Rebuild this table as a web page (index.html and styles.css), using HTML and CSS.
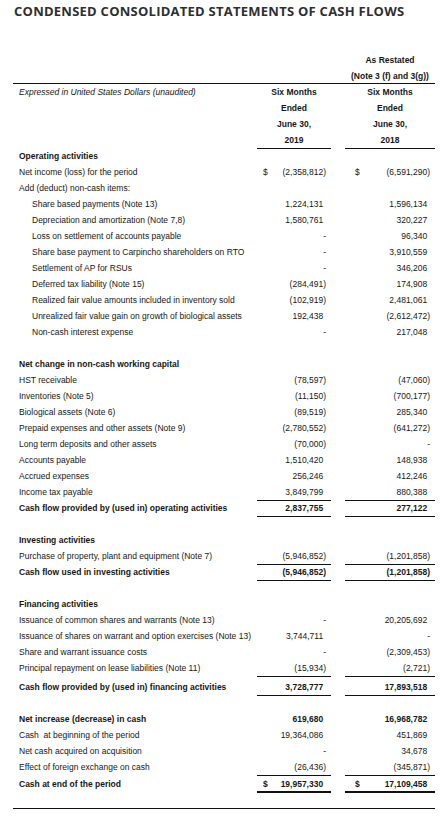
FILE: index.html
```html
<!DOCTYPE html>
<html lang="en">
<head>
<meta charset="utf-8">
<title>Condensed Consolidated Statements of Cash Flows</title>
<link rel="stylesheet" href="styles.css">
</head>
<body>
<h1 class="title">CONDENSED CONSOLIDATED STATEMENTS OF CASH FLOWS</h1>
<div class="statement">
  <div class="row"><div class="lbl"></div><div></div><div></div><div class="hd">As Restated</div></div>
  <div class="row rule-all"><div class="lbl"></div><div></div><div></div><div class="hd">(Note 3 (f) and 3(g))</div></div>
  <div class="row"><div class="lbl it">Expressed in United States Dollars (unaudited)</div><div class="hd">Six Months</div><div></div><div class="hd">Six Months</div></div>
  <div class="row"><div class="lbl"></div><div class="hd">Ended</div><div></div><div class="hd">Ended</div></div>
  <div class="row"><div class="lbl"></div><div class="hd">June 30,</div><div></div><div class="hd">June 30,</div></div>
  <div class="row"><div class="lbl"></div><div class="hd ul">2019</div><div></div><div class="hd ul">2018</div></div>

  <div class="row"><div class="lbl b">Operating activities</div><div></div><div></div><div></div></div>
  <div class="row"><div class="lbl">Net income (loss) for the period</div><div class="amt c1"><span class="cur">$</span><span>(2,358,812)</span></div><div></div><div class="amt c2"><span class="cur">$</span><span>(6,591,290)</span></div></div>
  <div class="row"><div class="lbl">Add (deduct) non-cash items:</div><div></div><div></div><div></div></div>
  <div class="row"><div class="lbl ind">Share based payments (Note 13)</div><div class="amt c1"><span class="p">1,224,131</span></div><div></div><div class="amt c2"><span class="p">1,596,134</span></div></div>
  <div class="row"><div class="lbl ind">Depreciation and amortization (Note 7,8)</div><div class="amt c1"><span class="p">1,580,761</span></div><div></div><div class="amt c2"><span class="p">320,227</span></div></div>
  <div class="row"><div class="lbl ind">Loss on settlement of accounts payable</div><div class="amt c1"><span>-</span></div><div></div><div class="amt c2"><span class="p">96,340</span></div></div>
  <div class="row"><div class="lbl ind">Share base payment to Carpincho shareholders on RTO</div><div class="amt c1"><span>-</span></div><div></div><div class="amt c2"><span class="p">3,910,559</span></div></div>
  <div class="row"><div class="lbl ind">Settlement of AP for RSUs</div><div class="amt c1"><span>-</span></div><div></div><div class="amt c2"><span class="p">346,206</span></div></div>
  <div class="row"><div class="lbl ind">Deferred tax liability (Note 15)</div><div class="amt c1"><span>(284,491)</span></div><div></div><div class="amt c2"><span class="p">174,908</span></div></div>
  <div class="row"><div class="lbl ind">Realized fair value amounts included in inventory sold</div><div class="amt c1"><span>(102,919)</span></div><div></div><div class="amt c2"><span class="p">2,481,061</span></div></div>
  <div class="row"><div class="lbl ind">Unrealized fair value gain on growth of biological assets</div><div class="amt c1"><span class="p">192,438</span></div><div></div><div class="amt c2"><span>(2,612,472)</span></div></div>
  <div class="row"><div class="lbl ind">Non-cash interest expense</div><div class="amt c1"><span>-</span></div><div></div><div class="amt c2"><span class="p">217,048</span></div></div>
  <div class="row"></div>

  <div class="row"><div class="lbl b">Net change in non-cash working capital</div><div></div><div></div><div></div></div>
  <div class="row"><div class="lbl">HST receivable</div><div class="amt c1"><span>(78,597)</span></div><div></div><div class="amt c2"><span>(47,060)</span></div></div>
  <div class="row"><div class="lbl">Inventories (Note 5)</div><div class="amt c1"><span>(11,150)</span></div><div></div><div class="amt c2"><span>(700,177)</span></div></div>
  <div class="row"><div class="lbl">Biological assets (Note 6)</div><div class="amt c1"><span>(89,519)</span></div><div></div><div class="amt c2"><span class="p">285,340</span></div></div>
  <div class="row"><div class="lbl">Prepaid expenses and other assets (Note 9)</div><div class="amt c1"><span>(2,780,552)</span></div><div></div><div class="amt c2"><span>(641,272)</span></div></div>
  <div class="row"><div class="lbl">Long term deposits and other assets</div><div class="amt c1"><span>(70,000)</span></div><div></div><div class="amt c2"><span>-</span></div></div>
  <div class="row"><div class="lbl">Accounts payable</div><div class="amt c1"><span class="p">1,510,420</span></div><div></div><div class="amt c2"><span class="p">148,938</span></div></div>
  <div class="row"><div class="lbl">Accrued expenses</div><div class="amt c1"><span class="p">256,246</span></div><div></div><div class="amt c2"><span class="p">412,246</span></div></div>
  <div class="row"><div class="lbl">Income tax payable</div><div class="amt c1 ul"><span class="p">3,849,799</span></div><div></div><div class="amt c2 ul"><span class="p">880,388</span></div></div>
  <div class="row b"><div class="lbl">Cash flow provided by (used in) operating activities</div><div class="amt c1 ul"><span class="p">2,837,755</span></div><div></div><div class="amt c2 ul"><span class="p">277,122</span></div></div>
  <div class="row"></div>

  <div class="row"><div class="lbl b">Investing activities</div><div></div><div></div><div></div></div>
  <div class="row"><div class="lbl">Purchase of property, plant and equipment (Note 7)</div><div class="amt c1 ul"><span>(5,946,852)</span></div><div></div><div class="amt c2 ul"><span>(1,201,858)</span></div></div>
  <div class="row b"><div class="lbl">Cash flow used in investing activities</div><div class="amt c1 ul"><span>(5,946,852)</span></div><div></div><div class="amt c2 ul"><span>(1,201,858)</span></div></div>
  <div class="row"></div>

  <div class="row"><div class="lbl b">Financing activities</div><div></div><div></div><div></div></div>
  <div class="row"><div class="lbl">Issuance of common shares and warrants (Note 13)</div><div class="amt c1"><span>-</span></div><div></div><div class="amt c2"><span class="p">20,205,692</span></div></div>
  <div class="row"><div class="lbl">Issuance of shares on warrant and option exercises (Note 13)</div><div class="amt c1"><span class="p">3,744,711</span></div><div></div><div class="amt c2"><span>-</span></div></div>
  <div class="row"><div class="lbl">Share and warrant issuance costs</div><div class="amt c1"><span>-</span></div><div></div><div class="amt c2"><span>(2,309,453)</span></div></div>
  <div class="row h17"><div class="lbl">Principal repayment on lease liabilities (Note 11)</div><div class="amt c1 ul"><span>(15,934)</span></div><div></div><div class="amt c2 ul"><span>(2,721)</span></div></div>
  <div class="row b h18"><div class="lbl">Cash flow provided by (used in) financing activities</div><div class="amt c1 ul"><span class="p">3,728,777</span></div><div></div><div class="amt c2 ul"><span class="p">17,893,518</span></div></div>
  <div class="row"></div>

  <div class="row b"><div class="lbl">Net increase (decrease) in cash</div><div class="amt c1"><span class="p">619,680</span></div><div></div><div class="amt c2"><span class="p">16,968,782</span></div></div>
  <div class="row"><div class="lbl">Cash &nbsp;at beginning of the period</div><div class="amt c1"><span class="p">19,364,086</span></div><div></div><div class="amt c2"><span class="p">451,869</span></div></div>
  <div class="row"><div class="lbl">Net cash acquired on acquisition</div><div class="amt c1"><span>-</span></div><div></div><div class="amt c2"><span class="p">34,678</span></div></div>
  <div class="row"><div class="lbl">Effect of foreign exchange on cash</div><div class="amt c1 ul"><span>(26,436)</span></div><div></div><div class="amt c2 ul"><span>(345,871)</span></div></div>
  <div class="row b end"><div class="lbl">Cash at end of the period</div><div class="amt c1 dul"><span class="cur">$</span><span class="p">19,957,330</span></div><div></div><div class="amt c2 dul"><span class="cur">$</span><span class="p">17,109,458</span></div></div>
  <div class="row rule-all"></div>
</div>
</body>
</html>
```
FILE: styles.css
```css
html, body {
  margin: 0;
  padding: 0;
  background: #ffffff;
}

.title {
  margin: 0;
  padding: 3px 0 0 14px;
  font-family: "Open Sans", "DejaVu Sans", sans-serif;
  font-weight: 700;
  font-size: 13px;
  line-height: 16px;
  color: #2f2f2f;
  letter-spacing: 0.25px;
  white-space: nowrap;
}

.statement {
  margin: 33px 0 0 13px;
  width: 422px;
  font-family: "Liberation Sans", Arial, sans-serif;
  font-size: 8.5px;
  color: #161616;
}

.row {
  display: grid;
  grid-template-columns: 244px 74px 14px 90px;
  height: 16px;
  line-height: 16px;
}

.row > div {
  box-sizing: border-box;
  height: 100%;
  white-space: nowrap;
}

.row.h17 {
  height: 17px;
}

.row.h18 {
  height: 18px;
}

.row.h18 > div {
  padding-top: 2px;
}

.row.end {
  height: 18px;
  line-height: 14px;
}

.row.end > div {
  padding-top: 2px;
}

.row.b {
  font-weight: 700;
}

.rule-all {
  border-bottom: 1px solid #111;
  box-sizing: border-box;
}

.lbl {
  padding-left: 6px;
}

.lbl.ind {
  padding-left: 19px;
}

.b {
  font-weight: 700;
}

.it {
  font-style: italic;
}

.hd {
  text-align: center;
  font-weight: 700;
}

.ul {
  border-bottom: 1px solid #111;
}

.dul {
  border-bottom: 2px solid #111;
}

.amt {
  display: flex;
  justify-content: flex-end;
  padding-right: 5px;
}

.c1 {
  padding-left: 6px;
}

.c2 {
  padding-left: 10px;
}

.cur {
  margin-right: auto;
}

.p {
  padding-right: 0.333em;
}
```
